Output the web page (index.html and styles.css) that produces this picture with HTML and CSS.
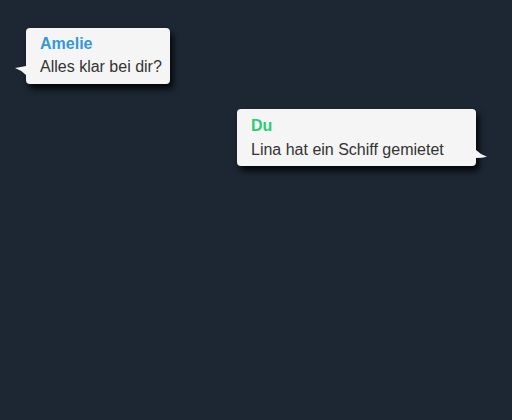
FILE: index.html
```html
<!DOCTYPE html>
<html lang="de">
<head>
<meta charset="utf-8">
<title>Chat</title>
<link rel="stylesheet" href="styles.css">
</head>
<body>
<div class="chat">
  <div class="bubble left">
    <div class="name amelie">Amelie</div>
    <div class="text">Alles klar bei dir?</div>
    <svg class="tail tail-left" width="11" height="9" viewBox="0 0 11 9"><path d="M0 2 Q6 1.2 11 0 L11 9 Q6 4 0 2 Z" fill="#f5f5f5"/></svg>
  </div>
  <div class="bubble right">
    <div class="name du">Du</div>
    <div class="text">Lina hat ein Schiff gemietet</div>
    <svg class="tail tail-right" width="11" height="8" viewBox="0 0 11 8"><path d="M0 0 Q5 5 11 6.8 Q6 8 0 8 Z" fill="#f5f5f5"/></svg>
  </div>
</div>
</body>
</html>
```
FILE: styles.css
```css
html, body {
  margin: 0;
  padding: 0;
  background: #1c2733;
}
body {
  font-family: "Liberation Sans", Arial, sans-serif;
}
.chat {
  width: 512px;
  height: 420px;
  box-sizing: border-box;
  background: #1c2733;
  display: flex;
  flex-direction: column;
  padding-top: 28px;
  gap: 25px;
  border-bottom-left-radius: 6px;
}
.bubble {
  position: relative;
  background: #f5f5f5;
  border-radius: 4px;
  box-shadow: 3px 5px 6px rgba(0, 0, 0, 0.85);
  padding: 6px 8px 7px 14px;
  box-sizing: border-box;
}
.bubble.left {
  align-self: flex-start;
  margin-left: 26px;
  width: 144px;
}
.bubble.right {
  align-self: flex-end;
  margin-right: 36px;
  width: 239px;
  padding-top: 7px;
  padding-bottom: 6px;
}
.name {
  font-weight: bold;
  font-size: 16px;
  line-height: 20px;
  margin-bottom: 3px;
}
.bubble.right .name {
  margin-bottom: 4px;
}
.amelie { color: #3498db; }
.du { color: #2ecc71; }
.text {
  font-size: 16px;
  line-height: 20px;
  color: #333333;
}
.tail {
  position: absolute;
  display: block;
}
.tail-left {
  left: -11px;
  bottom: 9px;
}
.tail-right {
  right: -11px;
  bottom: 8px;
}
```
